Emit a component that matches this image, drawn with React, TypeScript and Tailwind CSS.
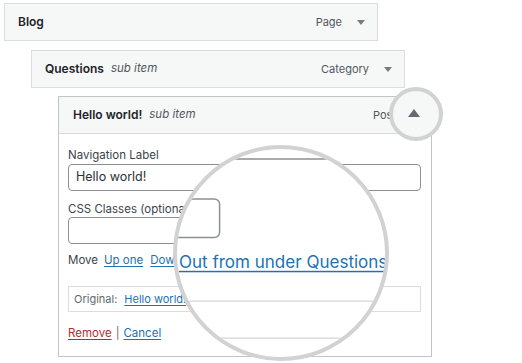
import React from 'react';

function Caret({ up = false }: { up?: boolean }) {
  return (
    <svg width="8" height="5" viewBox="0 0 8 5" className="ml-[15px] shrink-0">
      <path d={up ? 'M0 5h8L4 0z' : 'M0 0h8L4 5z'} fill="#787c82" />
    </svg>
  );
}

function Handle({ title, sub, type }: { title: string; sub?: boolean; type: string }) {
  return (
    <div className="flex h-[38px] items-center border border-[#dcdcde] bg-[#f6f7f7] pl-[13px] pr-[12px]">
      <span className="text-[12px] font-semibold text-[#1d2327]">{title}</span>
      {sub && <span className="ml-[7px] text-[11.5px] italic text-[#50575e]">sub item</span>}
      <span className="ml-auto text-[11px] text-[#50575e]">{type}</span>
      <Caret />
    </div>
  );
}

function Menu() {
  return (
    <div className="flex w-[522px] flex-col pt-[3px]">
      <div className="ml-[4px] w-[374px]">
        <Handle title="Blog" type="Page" />
      </div>
      <div className="ml-[31px] mt-[9px] w-[374px]">
        <Handle title="Questions" sub type="Category" />
      </div>
      <div className="ml-[58px] mt-[8px] w-[374px] border border-[#c3c4c7]">
        <div className="flex h-[37px] items-center border-b border-[#dcdcde] bg-[#f6f7f7] pl-[14px] pr-[12px]">
          <span className="text-[12px] font-semibold text-[#1d2327]">Hello world!</span>
          <span className="ml-[7px] text-[11.5px] italic text-[#50575e]">sub item</span>
          <span className="ml-auto text-[11px] text-[#50575e]">Post</span>
          <Caret up />
        </div>
        <div className="flex flex-col pl-[9px] pr-[10px] pt-[13px] pb-[15px] text-[11.5px] text-[#3c434a]">
          <label className="leading-[16px]">Navigation Label</label>
          <div className="mt-[1px] flex h-[27px] items-center rounded-[4px] border border-[#8c8f94] px-[7px] text-[12.5px] text-[#2c3338]">
            Hello world!
          </div>
          <label className="mt-[10px] leading-[16px]">CSS Classes (optional)</label>
          <div className="h-[27px] w-[172px] rounded-[4px] border border-[#8c8f94]" />
          <div className="mt-[8px] flex items-center leading-[16px]">
            <span>Move</span>
            <a className="ml-[6px] text-[#2271b1] underline underline-offset-2">Up one</a>
            <a className="ml-[7px] text-[#2271b1] underline underline-offset-2">Down one</a>
            <a className="ml-[7px] text-[#2271b1] underline underline-offset-2">Out from under Questions</a>
          </div>
          <div className="mt-[18px] flex h-[26px] items-center border border-[#dcdcde] pl-[5px] text-[11px] text-[#646970]">
            <span>Original:</span>
            <a className="ml-[7px] text-[11px] text-[#2271b1] underline underline-offset-2">Hello world!</a>
          </div>
          <div className="mt-[13px] flex items-center leading-[16px]">
            <a className="text-[#b32d2e] underline underline-offset-2">Remove</a>
            <span className="mx-[4px] text-[#646970]">|</span>
            <a className="text-[#2271b1] underline underline-offset-2">Cancel</a>
          </div>
        </div>
      </div>
    </div>
  );
}

export default function App() {
  return (
    <div className="relative h-[363px] w-[522px] overflow-hidden bg-white font-[Inter,'Liberation_Sans',sans-serif]">
      <Menu />
      {/* big magnifier */}
      <div className="absolute left-[173px] top-[145px] h-[216px] w-[216px] overflow-hidden rounded-full border-4 border-[#d2d2d2] bg-white">
        <div className="absolute left-[-177px] top-[-149px] h-[363px] w-[522px] origin-[281px_256px] scale-[1.48]">
          <Menu />
        </div>
      </div>
      {/* small magnifier on the toggle */}
      <div className="absolute left-[389px] top-[87px] flex h-[54px] w-[54px] items-center justify-center rounded-full border-4 border-[#d2d2d2] bg-[#f6f7f7]">
        <svg width="12" height="8" viewBox="0 0 12 8" className="-ml-[4px] -mt-[2px]">
          <path d="M0 8h12L6 0z" fill="#646970" />
        </svg>
      </div>
    </div>
  );
}
